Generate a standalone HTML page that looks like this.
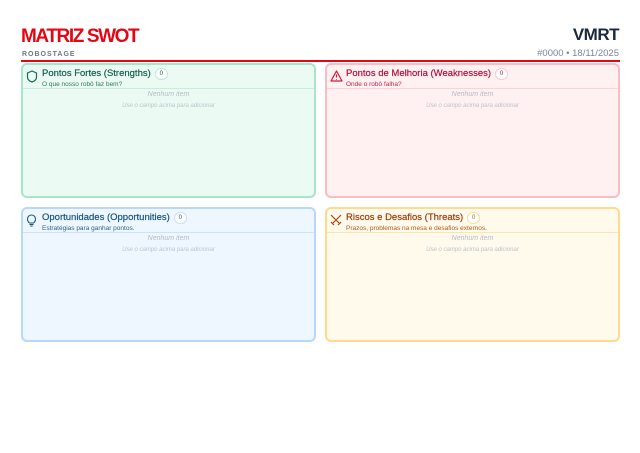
<!DOCTYPE html><html><head><meta charset="utf-8"><style>
*{margin:0;padding:0;box-sizing:border-box}
body{width:640px;height:453px;background:#fff;font-family:"Liberation Sans",sans-serif;position:relative;overflow:hidden}
.t{position:absolute;left:21px;top:26px;font-size:19px;font-weight:bold;color:#e30613;letter-spacing:-1.4px}
.rs{position:absolute;left:22px;top:51px;font-size:7px;font-weight:bold;color:#6b7a86;letter-spacing:1px}
.v{position:absolute;right:21px;top:25px;font-size:17px;color:#1a2a3a;font-weight:bold;letter-spacing:-0.5px}
.d{position:absolute;right:21px;top:48px;font-size:9.5px;color:#7b8894}
.line{position:absolute;left:21px;top:60px;width:599px;height:2px;background:#e30613}
.b{position:absolute;width:295px;height:135px;border:2px solid;border-radius:6px}
.h{position:absolute;left:19px;top:3px;font-size:9.5px;white-space:nowrap;-webkit-text-stroke:0.2px}
.c{display:inline-block;width:13px;height:12px;border-radius:6px;background:#fff;border:1px solid;font-size:6px;text-align:center;line-height:10px;margin-left:4px;vertical-align:1px;-webkit-text-stroke:0}
.s{position:absolute;left:19px;top:16px;font-size:6.5px}
.dv{position:absolute;left:0;right:0;top:23px;height:1px}
.n{position:absolute;left:0;right:0;top:26px;text-align:center;font-size:7px;font-style:italic;color:#b5bcc4}
.u{position:absolute;left:0;right:0;top:38px;text-align:center;font-size:6px;font-style:italic;color:#bcc3ca}
.i{position:absolute;left:3px;top:5px}
</style></head><body>
<div class="t">MATRIZ SWOT</div><div class="rs">ROBOSTAGE</div>
<div class="v">VMRT</div><div class="d">#0000 • 18/11/2025</div>
<div class="line"></div>

<div class="b" style="left:21px;top:63px;border-color:#a8e6ca;background:#ebfbf3">
<svg class="i" width="12" height="13" viewBox="0 0 12 13"><path d="M6 1L10.5 3v4c0 2.5-2 4.2-4.5 5C3.5 11.2 1.5 9.5 1.5 7V3z" fill="none" stroke="#166b55" stroke-width="1.2"/></svg>
<div class="h" style="color:#155e4b">Pontos Fortes (Strengths)<span class="c" style="border-color:#bfe9d8;color:#155e4b">0</span></div>
<div class="s" style="color:#2a7a62">O que nosso robô faz bem?</div>
<div class="dv" style="background:#c6eedc"></div>
<div class="n">Nenhum item</div><div class="u">Use o campo acima para adicionar</div></div>

<div class="b" style="left:325px;top:63px;border-color:#fbbcc5;background:#fff0f1">
<svg class="i" width="13" height="12" viewBox="0 0 13 12"><path d="M6.5 1L12 11H1z" fill="none" stroke="#d01a3a" stroke-width="1.2" stroke-linejoin="round"/><path d="M6.5 4.5v3M6.5 9v.6" stroke="#d01a3a" stroke-width="1.2"/></svg>
<div class="h" style="color:#b0123a">Pontos de Melhoria (Weaknesses)<span class="c" style="border-color:#f8ccd3;color:#b0123a">0</span></div>
<div class="s" style="color:#c0284a">Onde o robô falha?</div>
<div class="dv" style="background:#f9d3d8"></div>
<div class="n">Nenhum item</div><div class="u">Use o campo acima para adicionar</div></div>

<div class="b" style="left:21px;top:207px;border-color:#b8d8fa;background:#eef6ff">
<svg class="i" width="11" height="13" viewBox="0 0 11 13"><path d="M3.5 9C2 7.8 1.5 6.5 1.5 5a4 4 0 018 0c0 1.5-.5 2.8-2 4z" fill="none" stroke="#1a5a80" stroke-width="1.1"/><path d="M3.5 10.5h4M4.2 12h2.6" stroke="#1a5a80" stroke-width="1.1"/></svg>
<div class="h" style="color:#17557f">Oportunidades (Opportunities)<span class="c" style="border-color:#c9e0f7;color:#17557f">0</span></div>
<div class="s" style="color:#2a6590">Estratégias para ganhar pontos.</div>
<div class="dv" style="background:#cfe3f8"></div>
<div class="n">Nenhum item</div><div class="u">Use o campo acima para adicionar</div></div>

<div class="b" style="left:325px;top:207px;border-color:#fddb8e;background:#fffaeb">
<svg class="i" width="12" height="12" viewBox="0 0 12 12"><path d="M1 1l9 9M11 1L2 10M1 8l3 3M8 11l3-3" fill="none" stroke="#b3470b" stroke-width="1.2"/></svg>
<div class="h" style="color:#a13c0c">Riscos e Desafios (Threats)<span class="c" style="border-color:#f8dfa0;color:#c25a10">0</span></div>
<div class="s" style="color:#b35a1a">Prazos, problemas na mesa e desafios externos.</div>
<div class="dv" style="background:#f8e5b0"></div>
<div class="n">Nenhum item</div><div class="u">Use o campo acima para adicionar</div></div>
</body></html>
